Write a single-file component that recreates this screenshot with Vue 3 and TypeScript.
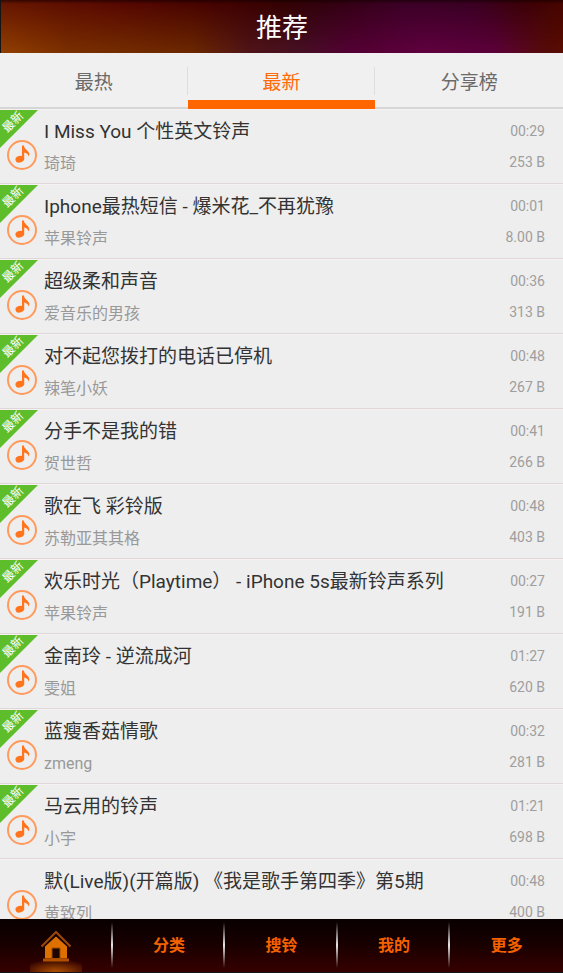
<script setup lang="ts">
import { ref } from 'vue'

interface Ringtone {
  title: string
  author: string
  time: string
  size: string
  isNew: boolean
}

const tabs: string[] = ['最热', '最新', '分享榜']
const activeTab = ref<number>(1)

const ringtones: Ringtone[] = [
  { title: 'I Miss You 个性英文铃声', author: '琦琦', time: '00:29', size: '253 B', isNew: true },
  { title: 'Iphone最热短信 - 爆米花_不再犹豫', author: '苹果铃声', time: '00:01', size: '8.00 B', isNew: true },
  { title: '超级柔和声音', author: '爱音乐的男孩', time: '00:36', size: '313 B', isNew: true },
  { title: '对不起您拨打的电话已停机', author: '辣笔小妖', time: '00:48', size: '267 B', isNew: true },
  { title: '分手不是我的错', author: '贺世哲', time: '00:41', size: '266 B', isNew: true },
  { title: '歌在飞 彩铃版', author: '苏勒亚其其格', time: '00:48', size: '403 B', isNew: true },
  { title: '欢乐时光（Playtime） - iPhone 5s最新铃声系列', author: '苹果铃声', time: '00:27', size: '191 B', isNew: true },
  { title: '金南玲 - 逆流成河', author: '雯姐', time: '01:27', size: '620 B', isNew: true },
  { title: '蓝瘦香菇情歌', author: 'zmeng', time: '00:32', size: '281 B', isNew: true },
  { title: '马云用的铃声', author: '小宇', time: '01:21', size: '698 B', isNew: true },
  { title: '默(Live版)(开篇版) 《我是歌手第四季》第5期', author: '黄致列', time: '00:48', size: '400 B', isNew: false },
]

const links: string[] = ['分类', '搜铃', '我的', '更多']
</script>

<template>
  <div class="page">
    <header class="header">
      <h1>推荐</h1>
    </header>

    <nav class="tabs">
      <button
        v-for="(tab, i) in tabs"
        :key="tab"
        type="button"
        class="tab"
        :class="{ active: i === activeTab }"
        @click="activeTab = i"
      >
        {{ tab }}
      </button>
    </nav>

    <ul class="list">
      <li v-for="(r, i) in ringtones" :key="i" class="row">
        <span v-if="r.isNew" class="badge"><span class="badge-text">最新</span></span>
        <svg class="note" viewBox="0 0 30 30" aria-hidden="true">
          <circle cx="15" cy="15" r="14" fill="none" stroke="#ff9a5c" stroke-width="2" />
          <ellipse cx="12.8" cy="19.200" rx="4.400" ry="3.300" transform="rotate(-18 12.800 19.200)" fill="#ff741c" />
          <path d="M15 5.500h1.900c.3 3 2.500 4 4 5.800 1.500 1.700 2 3.400.8 5.200-.7-2.300-2.400-3.600-4.500-3.900V19.500H15z" fill="#ff741c" />
        </svg>
        <div class="info">
          <div class="title">{{ r.title }}</div>
          <div class="author">{{ r.author }}</div>
        </div>
        <div class="meta">
          <div>{{ r.time }}</div>
          <div>{{ r.size }}</div>
        </div>
      </li>
    </ul>

    <nav class="bottom">
      <a href="#" class="item home" aria-label="首页">
        <svg class="house" viewBox="0 0 32 32" aria-hidden="true">
          <path d="M16 6.500L27 16.500v12H5v-12z" fill="#de7000" />
          <path d="M12 18h8v10.500h-8z" fill="#1c0500" stroke="#a34a00" stroke-width="1" />
          <path d="M1.500 16.500L16 2l14.500 14.500" fill="none" stroke="#984608" stroke-width="2.200" />
          <path d="M3 28.500h26v3H3z" fill="#b05000" />
        </svg>
      </a>
      <a v-for="link in links" :key="link" href="#" class="item">{{ link }}</a>
    </nav>
  </div>
</template>

<style>
body {
  margin: 0;
  background: #eeeeee;
}
</style>

<style scoped>
.page {
  display: flex;
  flex-direction: column;
  height: 100vh;
  font-family: Roboto, "Noto Sans CJK SC", sans-serif;
  background: #eeeeee;
}

.header {
  position: relative;
  flex: none;
  display: flex;
  align-items: center;
  justify-content: center;
  height: 53px;
  padding-top: 2px;
  border-left: 1px solid #151515;
  box-sizing: border-box;
  background:
    linear-gradient(180deg, rgba(20, 0, 0, 0.6) 0, rgba(20, 0, 0, 0) 4px),
    linear-gradient(90deg, #641400 0%, #560600 20%, #400000 40%, #340000 50%, #30000c 57%, #3a0026 72%, #380022 84%, #3a0008 92%, #460400 100%);
}

/* Warm-to-purple glow that strengthens towards the lower edge */
.header::before {
  content: "";
  position: absolute;
  inset: 0;
  background: linear-gradient(90deg, #924000 0%, #7a3000 12%, #6c2800 34%, #501418 44%, #461024 53%, #540034 62%, #60003f 76%, #5c003a 88%, #560c08 97%, #5a0c00 100%);
  mask-image: linear-gradient(180deg, transparent 0, #000 100%);
}

.header h1 {
  position: relative;
  margin: 0;
  font-size: 26px;
  line-height: 36px;
  font-weight: 400;
  color: #ffffff;
}

.tabs {
  flex: none;
  display: flex;
  height: 56px;
  box-sizing: border-box;
  background: linear-gradient(#d6d6d6, #d6d6d6) bottom / 100% 2px no-repeat #f0f0f0;
}

.tab {
  flex: 1;
  padding: 12px 0 0;
  border: 0;
  border-bottom: 9px solid transparent;
  background: linear-gradient(#dedede, #dedede) right 14px / 1px 28px no-repeat;
  background-origin: border-box;
  font-family: inherit;
  font-size: 19px;
  line-height: 28px;
  color: #6a6a6a;
  cursor: pointer;
}

.tab:last-child {
  background: none;
}

.tab.active {
  border-bottom-color: #ff6600;
  color: #ff6a0a;
}

.list {
  flex: 1;
  min-height: 0;
  margin: 0;
  padding: 0;
  list-style: none;
  overflow-y: auto;
  scrollbar-width: none;
}

.row {
  position: relative;
  display: flex;
  align-items: flex-start;
  height: 75px;
  box-sizing: border-box;
  padding: 0 18px 0 7px;
  border-top: 1px solid #f7f2f2;
  border-bottom: 1px solid #dfd6d7;
  background: #eeeeee;
}

.badge {
  position: absolute;
  top: 0;
  left: 0;
  width: 38px;
  height: 38px;
  background: #5dbd2b;
  clip-path: polygon(0 0, 100% 0, 0 100%);
}

.badge-text {
  position: absolute;
  top: 3px;
  left: 0;
  width: 26px;
  font-size: 12px;
  line-height: 18px;
  text-align: center;
  color: #ffffff;
  transform: rotate(-45deg);
}

.note {
  flex: none;
  width: 30px;
  height: 30px;
  margin-top: 30px;
}

.info {
  flex: 1;
  min-width: 0;
  padding: 8px 0 0 7px;
}

.title {
  font-size: 19px;
  line-height: 28px;
  color: #333333;
  white-space: nowrap;
}

.author {
  padding-top: 6px;
  font-size: 16px;
  line-height: 24px;
  color: #999999;
  white-space: nowrap;
}

.meta {
  display: grid;
  gap: 10px;
  padding-top: 11px;
  font-size: 14px;
  line-height: 21px;
  color: #9e9e9e;
  text-align: right;
}

.bottom {
  flex: none;
  display: grid;
  grid-template-columns: repeat(5, 1fr);
  height: 54px;
  box-sizing: border-box;
  border-bottom: 1px solid #18121a;
  background: linear-gradient(180deg, #090000 0%, #150000 40%, #360000 100%);
}

.item {
  display: flex;
  align-items: center;
  justify-content: center;
  font-size: 16px;
  line-height: 24px;
  font-weight: 700;
  color: #f56200;
  text-decoration: none;
  background:
    linear-gradient(180deg, rgba(210, 210, 210, 0), #e6e6e6 50%, rgba(210, 210, 210, 0)) right 3px / 2px 46px no-repeat;
}

.item:last-child {
  background: none;
}

.home {
  background:
    linear-gradient(180deg, rgba(210, 210, 210, 0), #e6e6e6 50%, rgba(210, 210, 210, 0)) right 3px / 2px 46px no-repeat,
    radial-gradient(ellipse 36px 13px at 50% 100%, rgba(190, 90, 0, 0.9), rgba(120, 40, 0, 0)) center bottom / 52px 13px no-repeat;
}

.house {
  width: 32px;
  height: 32px;
}
</style>
